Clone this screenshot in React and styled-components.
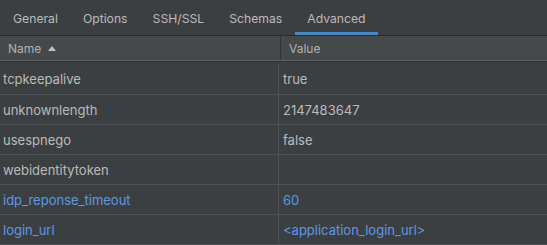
import React from "react";
import styled, { createGlobalStyle } from "styled-components";

const Global = createGlobalStyle`
  html, body { margin: 0; padding: 0; background: #3c3f41; }
  body { font-family: Inter, "Noto Sans", "Liberation Sans", sans-serif; }
`;

const Page = styled.div`
  width: 547px;
  height: 245px;
  background: #3c3f41;
  overflow: hidden;
  display: flex;
  flex-direction: column;
`;

const TabBar = styled.div`
  display: flex;
  height: 36px;
  padding-left: 0.5px;
  border-bottom: 1px solid #2b2b2b;
  box-sizing: content-box;
`;

const Tab = styled.div`
  padding: 4px 12.5px 0;
  display: flex;
  align-items: center;
  font-size: 12.2px;
  color: #bbbbbb;
  box-sizing: border-box;
  border-bottom: 3px solid ${(p) => (p.$active ? "#4a88c7" : "transparent")};
`;

const Header = styled.div`
  display: grid;
  grid-template-columns: 280px 1fr;
  height: 24px;
  background: #45494a;
  border-bottom: 1px solid #5a5d5f;
  box-shadow: 0 1px 0 #313335;
`;

const HeadCell = styled.div`
  display: flex;
  align-items: center;
  gap: 6px;
  padding: 1px 0 0 8px;
  font-size: 12px;
  color: #aeb2b5;
  border-left: ${(p) => (p.$first ? "none" : "1px solid #313335")};
`;

const Arrow = styled.span`
  width: 0;
  height: 0;
  border-left: 4px solid transparent;
  border-right: 4px solid transparent;
  border-bottom: 5px solid #c0c0c0;
  margin-left: 1px;
`;

const Body = styled.div`
  margin-top: 3px;
  display: flex;
  flex-direction: column;
`;

const Row = styled.div`
  display: grid;
  grid-template-columns: 279px 1fr;
  height: 30px;
  border-bottom: 1px solid #4e5254;
  box-sizing: border-box;
  &:first-child { height: 31px; }
`;

const Cell = styled.div`
  display: flex;
  align-items: center;
  padding-left: ${(p) => (p.$first ? "3px" : "4px")};
  font-size: 13px;
  color: ${(p) => (p.$blue ? "#5c98e9" : "#bbbbbb")};
  border-right: ${(p) => (p.$first ? "1px solid #4e5254" : "none")};
  white-space: nowrap;
`;

const tabs = ["General", "Options", "SSH/SSL", "Schemas", "Advanced"];

const rows = [
  ["tcpkeepalive", "true"],
  ["unknownlength", "2147483647"],
  ["usespnego", "false"],
  ["webidentitytoken", ""],
  ["idp_reponse_timeout", "60", true],
  ["login_url", "<application_login_url>", true],
];

export default function App() {
  return (
    <Page>
      <Global />
      <TabBar>
        {tabs.map((t) => (
          <Tab key={t} $active={t === "Advanced"}>
            {t}
          </Tab>
        ))}
      </TabBar>
      <Header>
        <HeadCell $first>
          Name <Arrow />
        </HeadCell>
        <HeadCell>Value</HeadCell>
      </Header>
      <Body>
        {rows.map(([n, v, b]) => (
          <Row key={n}>
            <Cell $first $blue={b}>
              {n}
            </Cell>
            <Cell $blue={b}>{v}</Cell>
          </Row>
        ))}
      </Body>
    </Page>
  );
}
